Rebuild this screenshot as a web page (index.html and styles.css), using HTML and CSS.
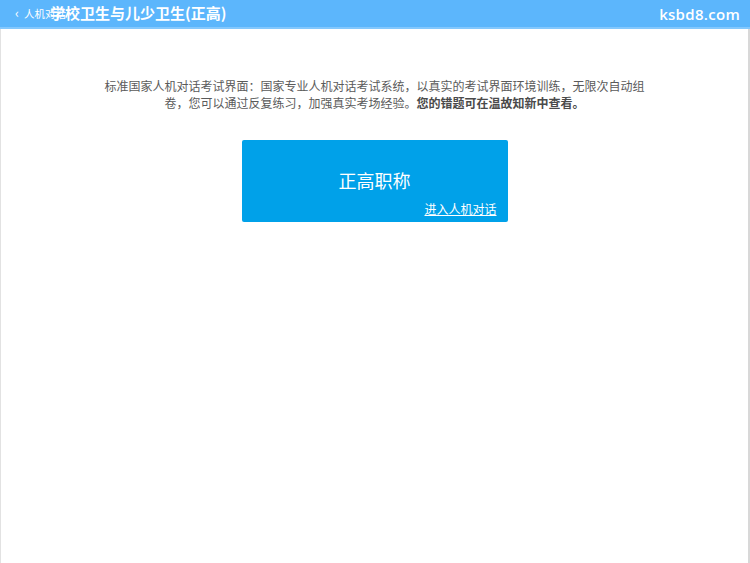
FILE: index.html
```html
<!DOCTYPE html>
<html lang="zh">
<head>
<meta charset="utf-8">
<title>学校卫生与儿少卫生(正高)</title>
<link rel="stylesheet" href="styles.css">
</head>
<body>
<header class="topbar">
  <a class="back" href="#"><span class="chev">‹</span> 人机对话</a>
  <h1 class="title">学校卫生与儿少卫生(正高)</h1>
  <span class="site">ksbd8.com</span>
</header>
<main class="content">
  <p class="intro">标准国家人机对话考试界面：国家专业人机对话考试系统，以真实的考试界面环境训练，无限次自动组卷，您可以通过反复练习，加强真实考场经验。<strong>您的错题可在温故知新中查看。</strong></p>
  <div class="card">
    <div class="card-title">正高职称</div>
    <a class="card-link" href="#">进入人机对话</a>
  </div>
</main>
</body>
</html>
```
FILE: styles.css
```css
html, body {
  margin: 0;
  padding: 0;
  height: 100%;
}
body {
  font-family: "Noto Sans CJK SC", "Liberation Sans", sans-serif;
  background: #fff;
  width: 750px;
  height: 563px;
  overflow: hidden;
}
.topbar {
  position: relative;
  height: 27px;
  background: #5cb6fc;
  border-bottom: 2px solid #84c8fd;
  display: flex;
  align-items: center;
  justify-content: space-between;
  padding: 0 10px 0 15px;
  color: #fff;
}
.back {
  color: #fff;
  text-decoration: none;
  font-size: 10.5px;
  display: flex;
  align-items: center;
  gap: 5px;
}
.chev {
  font-size: 13px;
  line-height: 1;
  margin-top: -2px;
}
.title {
  position: absolute;
  left: 50px;
  top: 0;
  margin: 0;
  font-size: 15px;
  font-weight: bold;
  line-height: 26px;
  color: #fff;
}
.site {
  font-family: "Open Sans", "Liberation Sans", sans-serif;
  font-size: 15px;
  font-weight: 600;
  letter-spacing: 0.3px;
}
.content {
  height: 534px;
  border-left: 1px solid #e2e2e2;
  border-right: 2px solid #d8d8d8;
  display: flex;
  flex-direction: column;
  align-items: center;
}
.intro {
  margin: 48px 0 0;
  width: 546px;
  font-size: 12px;
  line-height: 17px;
  color: #5a5a5a;
  text-align: center;
}
.intro strong {
  color: #4a4a4a;
}
.card {
  margin-top: 29px;
  width: 266px;
  height: 82px;
  background: #00a1e9;
  border-radius: 2px;
  display: flex;
  flex-direction: column;
  align-items: center;
  box-sizing: border-box;
  padding-top: 28px;
}
.card-title {
  color: #fff;
  font-size: 18px;
  line-height: 24px;
}
.card-link {
  align-self: flex-end;
  margin-right: 11px;
  margin-top: 9px;
  color: #fff;
  font-size: 12px;
  line-height: 16px;
  text-decoration: underline;
}
```
